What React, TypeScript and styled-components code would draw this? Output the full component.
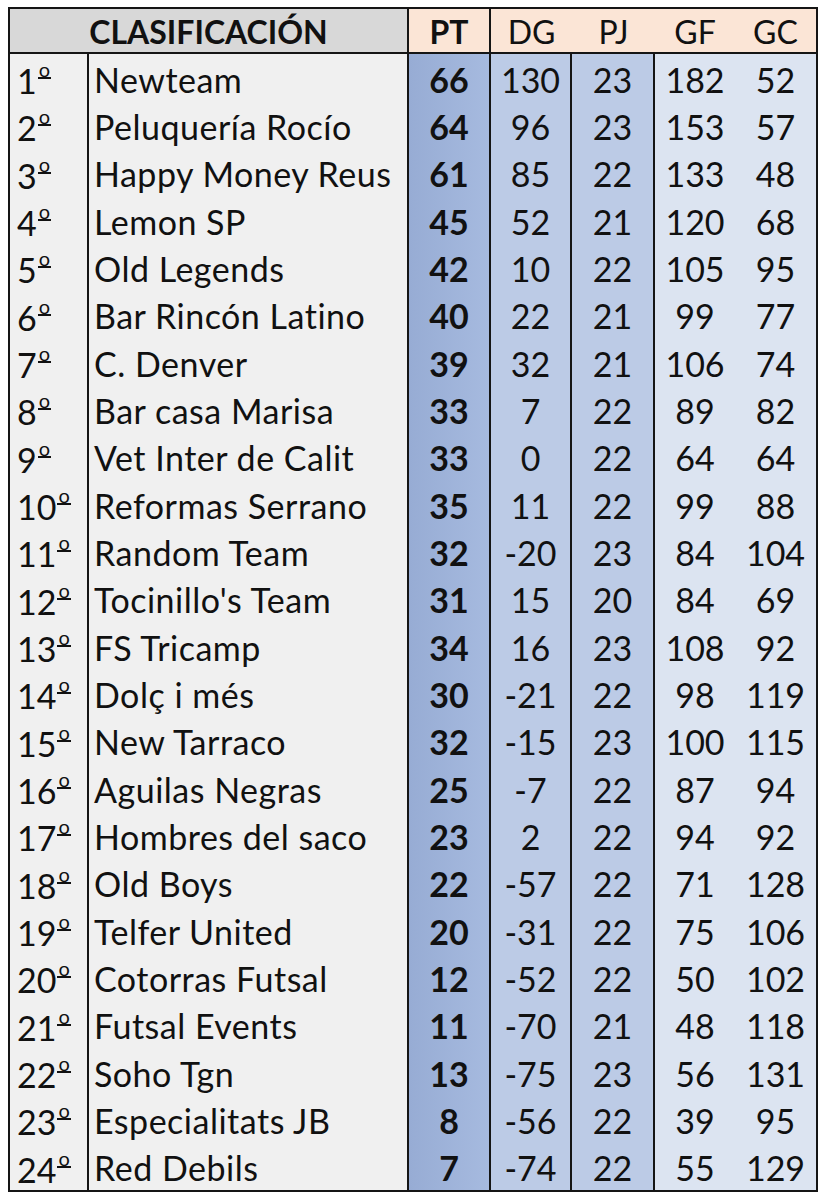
import React from "react";
import styled, { createGlobalStyle, css } from "styled-components";

const Global = createGlobalStyle`
  html, body { margin: 0; padding: 0; background: #ffffff; }
  body { font-family: Lato, "Open Sans", sans-serif; color: #111; }
`;

type Kind = "rank" | "name" | "pt" | "mid" | "light";

const Page = styled.div`
  padding: 7px 0 0 8px;
  width: 827px;
  height: 1200px;
  box-sizing: border-box;
`;

const Grid = styled.div`
  display: grid;
  grid-template-columns: 79px 320px 82px 81px 83px 80px 81px;
  grid-template-rows: 45px repeat(24, 1fr);
  width: 810px;
  height: 1185px;
  box-sizing: border-box;
  border: 2px solid #151515;
  line-height: 1;
`;

const HeadCell = styled.div<{ $span?: number; $bg: string; $bold?: boolean; $line?: boolean }>`
  grid-column: span ${(p) => p.$span ?? 1};
  background: ${(p) => p.$bg};
  border-bottom: 2px solid #151515;
  border-right: ${(p) => (p.$line ? "2px solid #151515" : "none")};
  box-sizing: border-box;
  display: flex;
  align-items: center;
  justify-content: center;
  font-size: 32px;
  font-weight: ${(p) => (p.$bold ? 700 : 400)};
  padding-top: 2px;
`;

const bgFor: Record<Kind, string> = {
  rank: "#f0f0f0",
  name: "#f0f0f0",
  pt: "linear-gradient(90deg, #97acd4 0%, #a6badf 100%)",
  mid: "#bccbe6",
  light: "#dce4f1",
};

const Cell = styled.div<{ $kind: Kind; $line?: boolean }>`
  background: ${(p) => bgFor[p.$kind]};
  border-right: ${(p) => (p.$line ? "2px solid #151515" : "none")};
  box-sizing: border-box;
  display: flex;
  align-items: center;
  padding-top: 4px;
  font-size: 34px;
  ${(p) =>
    p.$kind === "rank" || p.$kind === "name"
      ? css`
          justify-content: flex-start;
          padding-left: ${p.$kind === "rank" ? 7 : 5}px;
          letter-spacing: ${p.$kind === "name" ? 0.5 : 0}px;
        `
      : css`
          justify-content: center;
        `}
  font-weight: ${(p) => (p.$kind === "pt" ? 700 : 400)};
  white-space: nowrap;
`;

const Ordinal = styled.span`
  display: inline-block;
  font-size: 20px;
  line-height: 0.8;
  vertical-align: 17px;
  border-bottom: 2px solid #111;
  margin-left: 1px;
  padding: 0 1px;
`;

const rows: [string, number, number, number, number, number][] = [
  ["Newteam", 66, 130, 23, 182, 52],
  ["Peluquería Rocío", 64, 96, 23, 153, 57],
  ["Happy Money Reus", 61, 85, 22, 133, 48],
  ["Lemon SP", 45, 52, 21, 120, 68],
  ["Old Legends", 42, 10, 22, 105, 95],
  ["Bar Rincón Latino", 40, 22, 21, 99, 77],
  ["C. Denver", 39, 32, 21, 106, 74],
  ["Bar casa Marisa", 33, 7, 22, 89, 82],
  ["Vet Inter de Calit", 33, 0, 22, 64, 64],
  ["Reformas Serrano", 35, 11, 22, 99, 88],
  ["Random Team", 32, -20, 23, 84, 104],
  ["Tocinillo's Team", 31, 15, 20, 84, 69],
  ["FS Tricamp", 34, 16, 23, 108, 92],
  ["Dolç i més", 30, -21, 22, 98, 119],
  ["New Tarraco", 32, -15, 23, 100, 115],
  ["Aguilas Negras", 25, -7, 22, 87, 94],
  ["Hombres del saco", 23, 2, 22, 94, 92],
  ["Old Boys", 22, -57, 22, 71, 128],
  ["Telfer United", 20, -31, 22, 75, 106],
  ["Cotorras Futsal", 12, -52, 22, 50, 102],
  ["Futsal Events", 11, -70, 21, 48, 118],
  ["Soho Tgn", 13, -75, 23, 56, 131],
  ["Especialitats JB", 8, -56, 22, 39, 95],
  ["Red Debils", 7, -74, 22, 55, 129],
];

export default function App() {
  return (
    <>
      <Global />
      <Page>
        <Grid>
          <HeadCell $span={2} $bg="#d8d8d8" $bold $line>
            CLASIFICACIÓN
          </HeadCell>
          <HeadCell $bg="#fbe5d6" $bold $line>
            PT
          </HeadCell>
          <HeadCell $bg="#fbe5d6">DG</HeadCell>
          <HeadCell $bg="#fbe5d6">PJ</HeadCell>
          <HeadCell $bg="#fbe5d6">GF</HeadCell>
          <HeadCell $bg="#fbe5d6">GC</HeadCell>
          {rows.map(([name, pt, dg, pj, gf, gc], i) => (
            <React.Fragment key={name}>
              <Cell $kind="rank" $line>
                <span>
                  {i + 1}
                  <Ordinal>o</Ordinal>
                </span>
              </Cell>
              <Cell $kind="name" $line>{name}</Cell>
              <Cell $kind="pt" $line>{pt}</Cell>
              <Cell $kind="mid" $line>{dg}</Cell>
              <Cell $kind="mid" $line>{pj}</Cell>
              <Cell $kind="light">{gf}</Cell>
              <Cell $kind="light">{gc}</Cell>
            </React.Fragment>
          ))}
        </Grid>
      </Page>
    </>
  );
}
